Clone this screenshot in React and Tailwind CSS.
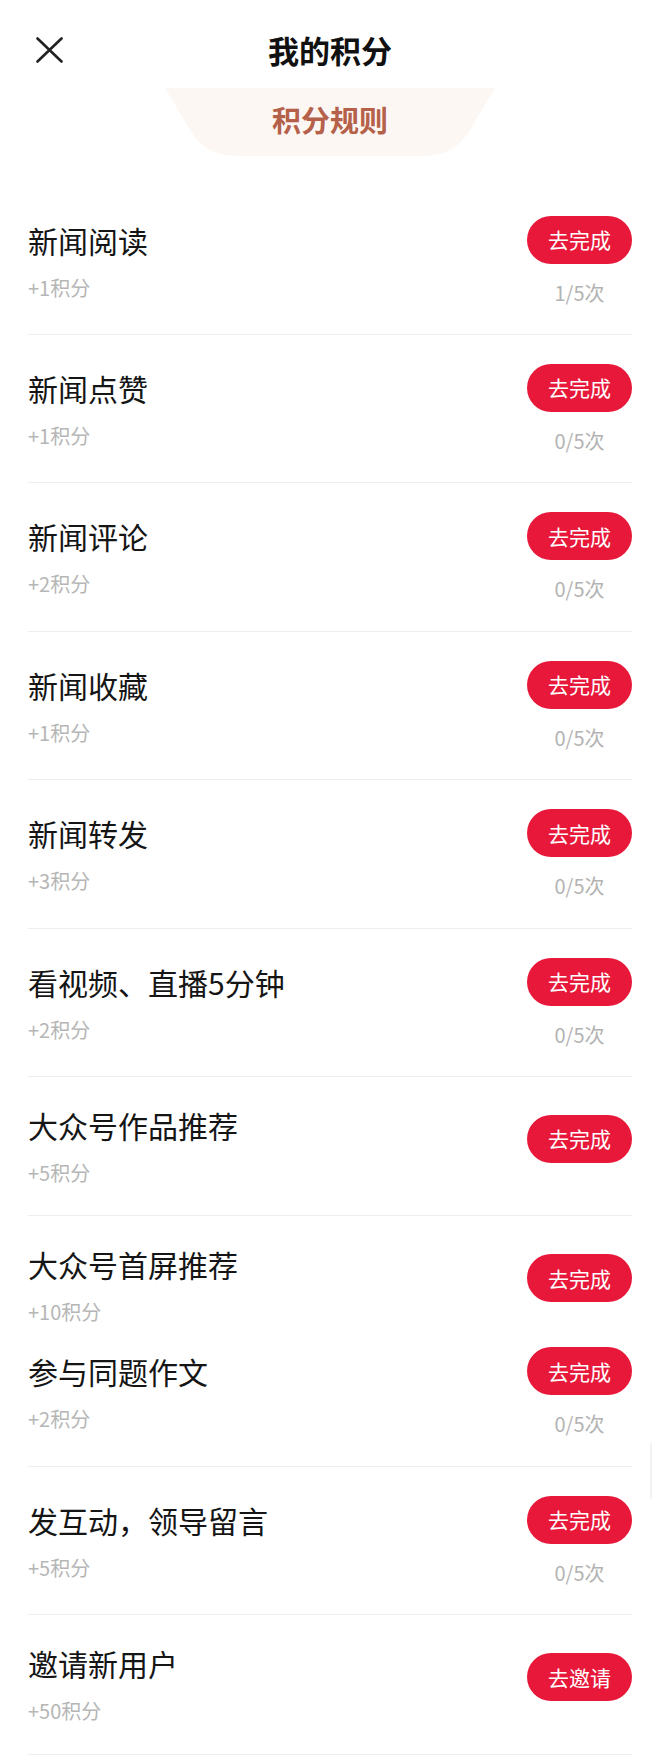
import React from "react";

const tasks = [
  { name: "新闻阅读", points: "+1积分", count: "1/5次", action: "去完成" },
  { name: "新闻点赞", points: "+1积分", count: "0/5次", action: "去完成" },
  { name: "新闻评论", points: "+2积分", count: "0/5次", action: "去完成" },
  { name: "新闻收藏", points: "+1积分", count: "0/5次", action: "去完成" },
  { name: "新闻转发", points: "+3积分", count: "0/5次", action: "去完成" },
  { name: "看视频、直播5分钟", points: "+2积分", count: "0/5次", action: "去完成" },
  { name: "大众号作品推荐", points: "+5积分", action: "去完成" },
  { name: "大众号首屏推荐", points: "+10积分", action: "去完成", open: true },
  { name: "参与同题作文", points: "+2积分", count: "0/5次", action: "去完成", squeezed: true },
  { name: "发互动，领导留言", points: "+5积分", count: "0/5次", action: "去完成" },
  { name: "邀请新用户", points: "+50积分", action: "去邀请" },
];

const font = { fontFamily: '"Noto Sans CJK SC", "Noto Sans", sans-serif' };

const TaskRow = ({ task }) => {
  const hasCount = Boolean(task.count);

  // rows with a counter sit a little lower than the ones without
  let rowClass = hasCount
    ? "pt-[29px] pb-[22.4px] border-b border-[#efefef]"
    : "pt-[24px] pb-[18.5px] border-b border-[#efefef]";
  if (task.squeezed) rowClass = "pt-[11px] pb-[22.4px] border-b border-[#efefef]";
  if (task.open) rowClass = "pt-[24px]";

  return (
    <div className={`flex justify-between items-start ${rowClass}`}>
      <div className="flex flex-col">
        <span className="text-[30px] leading-[48px] text-[#151515]">{task.name}</span>
        <span className="text-[20px] leading-[48px] text-[#b6b6b6]">{task.points}</span>
      </div>

      <div className={`flex flex-col items-center w-[105px] ${hasCount ? "" : "mt-[14px]"}`}>
        <button className="w-[105px] h-[48px] rounded-full bg-[#e8183a] text-white text-[21px] leading-none flex items-center justify-center">
          {task.action}
        </button>
        {hasCount && (
          <span className="mt-[15px] text-[20px] leading-[28px] text-[#b3b3b3]">{task.count}</span>
        )}
      </div>
    </div>
  );
};

export default function App() {
  return (
    <div className="relative w-[660px] min-h-[1764px] bg-white" style={font}>
      {/* Header */}
      <div className="relative h-[88px] flex justify-center pt-[35px]">
        <button className="absolute left-[36px] top-[37px]">
          <svg width="27" height="26" viewBox="0 0 27 26" fill="none">
            <path d="M1.5 1.5L25.5 24.5M25.5 1.5L1.5 24.5" stroke="#222" strokeWidth="2.6" strokeLinecap="round" />
          </svg>
        </button>
        <h1 className="text-[31px] leading-[30px] font-bold text-[#111]">我的积分</h1>
      </div>

      {/* Rules tab */}
      <div className="relative mx-auto w-[330px] h-[68px] flex justify-center pt-[16px]">
        <svg className="absolute inset-0" width="330" height="68" viewBox="0 0 330 68">
          <path d="M0 0H330L305 42Q290 68 258 68H72Q40 68 25 42Z" fill="#fcf7f3" />
        </svg>
        <span className="relative text-[29px] leading-[30px] font-semibold text-[#b5614a]">积分规则</span>
      </div>

      {/* Task list */}
      <div className="px-[28px] mt-[30.6px]">
        {tasks.map((t) => (
          <TaskRow key={t.name} task={t} />
        ))}
      </div>

      {/* scroll indicator */}
      <div className="absolute left-[650px] top-[1443px] w-[2px] h-[56px] bg-[#f2f2f2]" />
    </div>
  );
}
